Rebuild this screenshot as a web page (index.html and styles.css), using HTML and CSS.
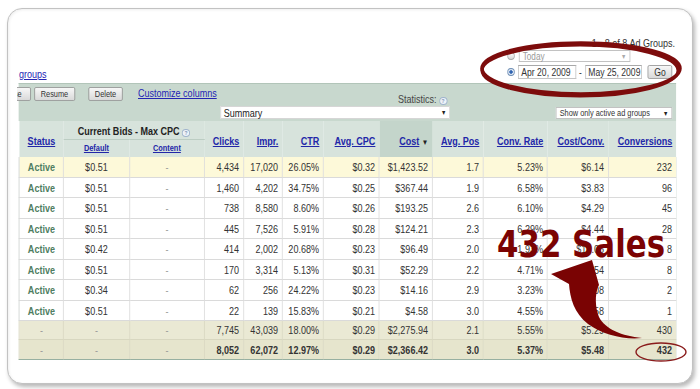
FILE: index.html
```html
<!DOCTYPE html>
<html>
<head>
<meta charset="utf-8">
<link rel="stylesheet" href="styles.css">
</head>
<body>
<div class="frame">
  <div class="shot">
    <div class="top">
      <a class="groups" href="#">groups</a>
      <div class="range">
        <div class="pager">1 - 8 of 8 Ad Groups.</div>
        <div class="rrow">
          <span class="radio"></span>
          <span class="sel today">Today<span class="caret">▾</span></span>
        </div>
        <div class="rrow second">
          <span class="radio on"></span>
          <span class="inp d1">Apr 20, 2009</span>
          <span class="dash">-</span>
          <span class="inp d2">May 25, 2009</span>
          <span class="btn go">Go</span>
        </div>
      </div>
    </div>
    <div class="toolbar">
      <div class="tb-left">
        <span class="btn cut">Pause</span>
        <span class="btn resume">Resume</span>
        <span class="btn delete">Delete</span>
        <a class="link" href="#">Customize columns</a>
      </div>
      <div class="tb-stats">
        <div class="stats-label">Statistics: <span class="help">?</span></div>
        <div class="sel summary">Summary<span class="caret dark">▾</span></div>
      </div>
      <div class="sel show">Show only active ad groups<span class="caret dark">▾</span></div>
    </div>
    <table class="grid">
      <colgroup>
        <col class="c1"><col class="c2"><col class="c3"><col class="c4"><col class="c5"><col class="c6"><col class="c7"><col class="c8"><col class="c9"><col class="c10"><col class="c11"><col class="c12">
      </colgroup>
      <thead>
        <tr class="h1">
          <th rowspan="2" class="c"><a href="#">Status</a></th>
          <th colspan="2" class="bids">Current Bids - Max CPC <span class="help">?</span></th>
          <th rowspan="2"><a href="#">Clicks</a></th>
          <th rowspan="2"><a href="#">Impr.</a></th>
          <th rowspan="2"><a href="#">CTR</a></th>
          <th rowspan="2"><a href="#">Avg. CPC</a></th>
          <th rowspan="2" class="sorted"><a href="#">Cost</a> <span class="tri">▼</span></th>
          <th rowspan="2"><a href="#">Avg. Pos</a></th>
          <th rowspan="2"><a href="#">Conv. Rate</a></th>
          <th rowspan="2"><a href="#">Cost/Conv.</a></th>
          <th rowspan="2"><a href="#">Conversions</a></th>
        </tr>
        <tr class="h2">
          <th class="sub"><a href="#">Default</a></th>
          <th class="sub"><a href="#">Content</a></th>
        </tr>
      </thead>
      <tbody>
        <tr class="hl"><td class="st">Active</td><td class="c">$0.51</td><td class="c na">-</td><td>4,434</td><td>17,020</td><td>26.05%</td><td>$0.32</td><td>$1,423.52</td><td>1.7</td><td>5.23%</td><td>$6.14</td><td>232</td></tr>
        <tr><td class="st">Active</td><td class="c">$0.51</td><td class="c na">-</td><td>1,460</td><td>4,202</td><td>34.75%</td><td>$0.25</td><td>$367.44</td><td>1.9</td><td>6.58%</td><td>$3.83</td><td>96</td></tr>
        <tr><td class="st">Active</td><td class="c">$0.51</td><td class="c na">-</td><td>738</td><td>8,580</td><td>8.60%</td><td>$0.26</td><td>$193.25</td><td>2.6</td><td>6.10%</td><td>$4.29</td><td>45</td></tr>
        <tr><td class="st">Active</td><td class="c">$0.51</td><td class="c na">-</td><td>445</td><td>7,526</td><td>5.91%</td><td>$0.28</td><td>$124.21</td><td>2.3</td><td>6.29%</td><td>$4.44</td><td>28</td></tr>
        <tr><td class="st">Active</td><td class="c">$0.42</td><td class="c na">-</td><td>414</td><td>2,002</td><td>20.68%</td><td>$0.23</td><td>$96.49</td><td>2.0</td><td>1.93%</td><td>$12.06</td><td>8</td></tr>
        <tr><td class="st">Active</td><td class="c">$0.51</td><td class="c na">-</td><td>170</td><td>3,314</td><td>5.13%</td><td>$0.31</td><td>$52.29</td><td>2.2</td><td>4.71%</td><td>$6.54</td><td>8</td></tr>
        <tr><td class="st">Active</td><td class="c">$0.34</td><td class="c na">-</td><td>62</td><td>256</td><td>24.22%</td><td>$0.23</td><td>$14.16</td><td>2.9</td><td>3.23%</td><td>$7.08</td><td>2</td></tr>
        <tr><td class="st">Active</td><td class="c">$0.51</td><td class="c na">-</td><td>22</td><td>139</td><td>15.83%</td><td>$0.21</td><td>$4.58</td><td>3.0</td><td>4.55%</td><td>$4.58</td><td>1</td></tr>
        <tr class="tot"><td class="c na">-</td><td class="c na">-</td><td class="c na">-</td><td>7,745</td><td>43,039</td><td>18.00%</td><td>$0.29</td><td>$2,275.94</td><td>2.1</td><td>5.55%</td><td>$5.29</td><td>430</td></tr>
        <tr class="tot total"><td class="c na">-</td><td class="c na">-</td><td class="c na">-</td><td>8,052</td><td>62,072</td><td>12.97%</td><td>$0.29</td><td>$2,366.42</td><td>3.0</td><td>5.37%</td><td>$5.48</td><td>432</td></tr>
      </tbody>
    </table>
  </div>
</div>
<svg class="overlay" width="700" height="389" viewBox="0 0 700 389">
  <ellipse cx="581" cy="68.5" rx="99" ry="25.5" fill="none" stroke="#7d0c0c" stroke-width="3.5"/>
  <ellipse cx="580" cy="70.5" rx="98" ry="25.5" fill="none" stroke="#7d0c0c" stroke-width="3"/>
  <ellipse cx="661" cy="352" rx="25" ry="9" fill="none" stroke="#8a1c1c" stroke-width="1.4"/>
  <path fill="#7a0303" d="M642 338 C622 336 605 329 599 317 C595 307 595 295 598 287 L599 285 L592 260 L551 274 L569 284 C570 298 574 313 588 324 C603 335 625 340 642 338 Z"/>
  <text class="sales" x="497" y="257" textLength="168" lengthAdjust="spacingAndGlyphs">432 Sales</text>
</svg>
</body>
</html>
```
FILE: styles.css
```css
html, body {
  margin: 0;
}
body {
  box-sizing: border-box;
  width: 700px;
  height: 389px;
  padding: 8px 0 0 7px;
  position: relative;
  overflow: hidden;
  background: #fff;
  font-family: "Liberation Sans", Arial, sans-serif;
  font-size: 11px;
  color: #333;
}
a { color: #2424b4; }

.frame {
  box-sizing: border-box;
  width: 686px;
  height: 376px;
  border: 1px solid #c2c2c2;
  border-radius: 15px;
  box-shadow: 2px 3px 4px rgba(0,0,0,.28), inset 1px 1px 3px rgba(0,0,0,.07);
  padding: 0 16px 0 9px;
  background: #fff;
}
/* the captured screen is squeezed horizontally (82%) inside the frame */
.shot {
  width: 803.66px;
  height: 100%;
  overflow: hidden;
  transform: scaleX(0.82);
  transform-origin: 0 0;
}

/* top area */
.top {
  height: 74px;
  display: flex;
  justify-content: space-between;
  align-items: flex-end;
}
.groups {
  margin: 0 0 2px 2.44px;
  line-height: 13px;
  font-size: 11px;
}
.range {
  width: 201.2px;
  margin-right: 4.9px;
  padding-bottom: 4px;
  display: flex;
  flex-direction: column;
  align-items: flex-start;
}
.pager {
  align-self: flex-end;
  margin-right: -3.7px;
  line-height: 13px;
  color: #333;
  white-space: nowrap;
}
.rrow {
  display: flex;
  align-items: center;
  height: 12px;
  white-space: nowrap;
}
.rrow.second {
  height: 14px;
  margin-top: 3px;
}
.radio {
  box-sizing: border-box;
  width: 9.76px;
  height: 8px;
  border-radius: 50%;
  border: 1px solid #aaa;
  background: linear-gradient(#fff, #d8d8d8);
  margin-right: 4.9px;
}
.radio.on {
  margin-right: 3.66px;
  border-color: #6f8fb5;
  background: radial-gradient(ellipse, #2f63b0 0 35%, #dfe8f4 45%);
}
.sel {
  box-sizing: border-box;
  position: relative;
  background: #fff;
  border: 1px solid #c2c2c2;
  font-size: 10px;
  padding-left: 3.5px;
  display: flex;
  align-items: center;
  white-space: nowrap;
}
.caret {
  position: absolute;
  right: 5px;
  top: 0;
  font-size: 8px;
  color: #aaa;
  line-height: 11px;
}
.caret.dark { color: #222; }
.today {
  width: 135.4px;
  height: 12px;
  color: #9a9a9a;
}
.inp {
  box-sizing: border-box;
  height: 14px;
  border: 1px solid #c4c4c4;
  border-top-color: #a8a8a8;
  background: #fff;
  font-size: 10.5px;
  line-height: 12px;
  padding-left: 3px;
  color: #333;
}
.d1 { width: 70.7px; }
.d2 { width: 69.5px; }
.dash {
  width: 11px;
  text-align: center;
  font-size: 10px;
}
.btn {
  box-sizing: border-box;
  display: inline-block;
  height: 14px;
  border: 1px solid #9a9a9a;
  border-radius: 2px;
  background: linear-gradient(#f7f7f7, #d9d9d9);
  font-size: 9px;
  line-height: 12px;
  text-align: center;
  color: #333;
}
.go {
  width: 29.3px;
  margin-left: 7.3px;
  font-size: 10.5px;
}

/* toolbar */
.toolbar {
  box-sizing: border-box;
  height: 38px;
  margin-left: 2.44px;
  background: #c8d8ce;
  border-top: 1px solid #b2c5b9;
  display: flex;
}
.tb-left {
  width: 245.1px;
  flex: none;
  display: flex;
  align-items: flex-start;
  padding-top: 3px;
  white-space: nowrap;
}
.cut {
  flex: none;
  width: 43.9px;
  margin-left: -29.3px;
  text-align: right;
  padding-right: 10.5px;
}
.resume { flex: none; width: 50px; margin-left: 3.66px; }
.delete { flex: none; width: 42.7px; margin-left: 15.9px; }
.link {
  margin-left: 18.3px;
  line-height: 13px;
  font-size: 11px;
}
.tb-stats {
  width: 280.5px;
  flex: none;
  display: flex;
  flex-direction: column;
  justify-content: flex-end;
  padding-bottom: 2px;
}
.stats-label {
  text-align: right;
  line-height: 11px;
  margin-bottom: 1px;
  padding-right: 3.5px;
  color: #444;
  font-size: 11px;
}
.help {
  box-sizing: border-box;
  display: inline-block;
  width: 9.76px;
  height: 8px;
  border-radius: 50%;
  border: 1px solid #9fb3cc;
  background: #eef3f8;
  color: #7f99bb;
  font-size: 6px;
  line-height: 6px;
  text-align: center;
  font-weight: bold;
  vertical-align: 0;
}
.summary {
  height: 13px;
  font-size: 11px;
  color: #222;
  border-color: #d6d6d6;
}
.show {
  width: 141.5px;
  height: 12px;
  margin-left: auto;
  margin-right: 4.9px;
  align-self: flex-end;
  margin-bottom: 2px;
  font-size: 9px;
  color: #333;
}

/* table */
.grid {
  margin-left: 2.44px;
  width: 801.22px;
  table-layout: fixed;
  border-collapse: collapse;
  font-size: 11px;
}
.c1 { width: 53.66px; } .c2 { width: 80.49px; } .c3 { width: 91.46px; }
.c4 { width: 47.56px; } .c5 { width: 47.56px; } .c6 { width: 50px; }
.c7 { width: 68.29px; } .c8 { width: 64.63px; } .c9 { width: 62.2px; }
.c10 { width: 78.05px; } .c11 { width: 74.39px; } .c12 { width: 82.93px; }

thead th {
  background: #d7e3dc;
  padding: 3px 4.9px 0 0;
  text-align: right;
  font-weight: bold;
  font-size: 11px;
  white-space: nowrap;
}
thead th a { color: #2226a8; }
.h1 { height: 18px; }
.h2 { height: 18px; }
thead th.c { text-align: center; padding-right: 0; }
thead th.bids {
  text-align: center;
  padding: 2px 0 0 0;
  color: #222;
  vertical-align: middle;
  border-bottom: 1px solid #bccdc3;
}
thead th.sub {
  text-align: center;
  font-size: 9px;
  padding: 0;
}
thead th.sorted { background: #c4d5cb; }
.tri { font-size: 8px; color: #222; }

tbody td {
  text-align: right;
  padding: 0 4.9px 0 0;
  height: 20px;
  line-height: 12px;
  border: 1px solid #dadada;
  border-top: none;
  white-space: nowrap;
  color: #333;
}
tbody tr:nth-child(even) td { height: 19px; }
tbody td:first-child { border-left-color: #cdd2cf; }
tbody td:last-child { border-right-color: #9fb5a8; }
tbody td.c { text-align: center; padding: 0; }
tbody td.st {
  text-align: center;
  padding: 0;
  font-weight: bold;
  color: #4f7d62;
}
tbody td.na { color: #9a9a9a; }
tr.hl td { background: #fdf9d9; }
tr.tot td {
  background: #eae9d4;
  height: 18px;
  border-color: #d8d7c0;
}
tr.tot td:last-child { border-right-color: #9fb5a8; }
tr.total td {
  background: #e6e5cd;
  font-weight: bold;
  border-bottom: 1px solid #97b0a1;
}
tr.total td.na { font-weight: normal; }

/* annotation overlay */
.overlay {
  position: absolute;
  left: 0;
  top: 0;
  pointer-events: none;
}
.sales {
  font-family: "DejaVu Sans", sans-serif;
  font-weight: bold;
  font-size: 37px;
  fill: #7b0303;
}
```
